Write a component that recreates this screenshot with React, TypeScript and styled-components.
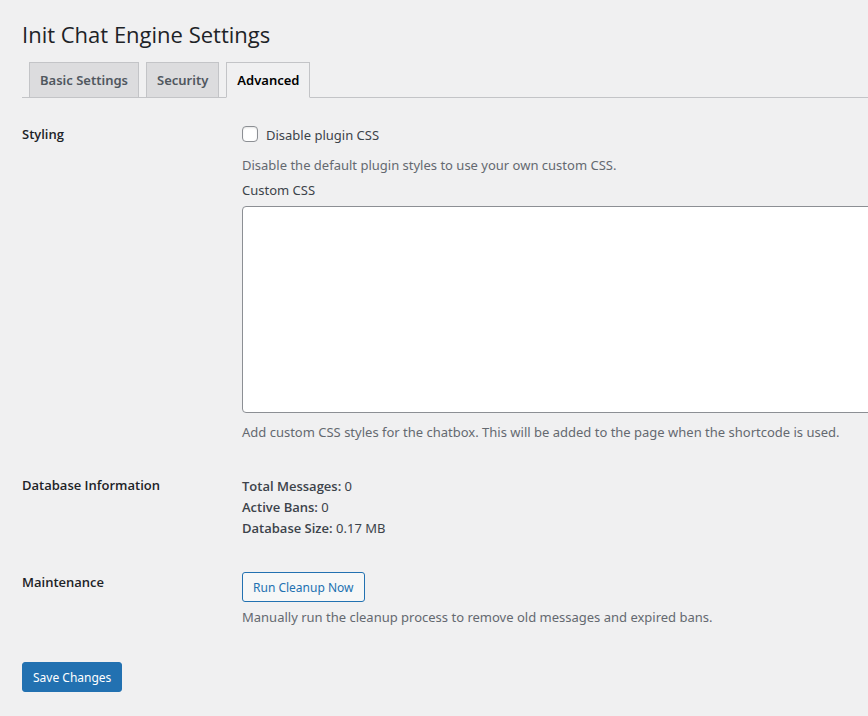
import React from "react";
import styled, { createGlobalStyle } from "styled-components";

const Global = createGlobalStyle`
  *, *::before, *::after { box-sizing: border-box; }
  body {
    margin: 0;
    background: #f0f0f1;
    color: #3c434a;
    font: 13px/20px "Segoe UI", "Noto Sans", "Open Sans", sans-serif;
    overflow-x: hidden;
  }
`;

const Page = styled.main`
  padding: 19px 0 24px 22px;
`;

const Title = styled.h1`
  margin: 0;
  color: #1d2327;
  font-family: "Segoe UI", "Open Sans", sans-serif;
  font-size: 22px;
  font-weight: 400;
  line-height: 30px;
`;

const Tabs = styled.nav`
  display: flex;
  gap: 7px;
  margin-top: 13px;
  padding-left: 7px;
  border-bottom: 1px solid #c3c4c7;
`;

const Tab = styled.a<{ $active?: boolean }>`
  padding: 5px 10px;
  margin-bottom: ${(p) => (p.$active ? "-1px" : "0")};
  border: 1px solid #c3c4c7;
  border-bottom: ${(p) => (p.$active ? "1px solid #f0f0f1" : "0")};
  background: ${(p) => (p.$active ? "#f0f0f1" : "#dcdcde")};
  color: ${(p) => (p.$active ? "#000" : "#50575e")};
  font-weight: 600;
  line-height: 24px;
  text-decoration: none;
  white-space: nowrap;
`;

const Form = styled.form`
  margin: 0;
`;

const Section = styled.section`
  display: grid;
  grid-template-columns: 220px minmax(0, 1fr);
  padding-top: 26px;
  & + & { padding-top: 32px; }
`;

const Heading = styled.h2`
  margin: 0;
  color: #1d2327;
  font-family: "Segoe UI", "Open Sans", sans-serif;
  font-size: 13px;
  font-weight: 600;
  line-height: 20px;
`;

const CheckLabel = styled.label`
  display: flex;
  align-items: flex-start;
  gap: 8px;
  line-height: 22px;
`;

const Checkbox = styled.input`
  appearance: none;
  width: 16px;
  height: 16px;
  margin: 2px 0 0;
  border: 1px solid #8c8f94;
  border-radius: 4px;
  background: #fff;
  box-shadow: inset 0 1px 2px rgba(0, 0, 0, 0.1);
  &:checked { background: #2271b1; }
`;

const Note = styled.p<{ $tight?: boolean }>`
  margin: ${(p) => (p.$tight ? "4px" : "8px")} 0 0;
  color: #646970;
  line-height: 22px;
`;

const FieldLabel = styled.label`
  display: block;
  margin: 3px 0 5px;
  line-height: 22px;
`;

const CodeArea = styled.textarea`
  display: block;
  width: calc(100% + 8px);
  padding: 3px 6px 2px;
  border: 1px solid #8c8f94;
  border-radius: 4px;
  background: #fff;
  color: #2c3338;
  font: 13px/20px "Liberation Mono", monospace;
  resize: none;
  scrollbar-width: none;
`;

const Stats = styled.p`
  margin: 0;
  padding: 1px 0;
  line-height: 21px;
  strong {
    font-family: "Segoe UI", "Open Sans", sans-serif;
    font-weight: 600;
  }
`;

const Button = styled.button<{ $primary?: boolean }>`
  display: block;
  min-height: 30px;
  padding: 2px 10px 0;
  border: 1px solid #2271b1;
  border-radius: 3px;
  background: ${(p) => (p.$primary ? "#2271b1" : "#f6f7f7")};
  color: ${(p) => (p.$primary ? "#fff" : "#2271b1")};
  font: 12px/26px "Segoe UI", "Noto Sans", "Open Sans", sans-serif;
  white-space: nowrap;
  cursor: pointer;
`;

const Submit = styled.div`
  padding-top: 34px;
`;

export default function App() {
  return (
    <>
      <Global />
      <Page>
        <Title>Init Chat Engine Settings</Title>
        <Tabs>
          <Tab href="#basic">Basic Settings</Tab>
          <Tab href="#security">Security</Tab>
          <Tab href="#advanced" $active aria-current="page">Advanced</Tab>
        </Tabs>
        <Form onSubmit={(e) => e.preventDefault()}>
          <Section>
            <Heading>Styling</Heading>
            <div>
              <CheckLabel htmlFor="disable-css">
                <Checkbox id="disable-css" type="checkbox" />
                Disable plugin CSS
              </CheckLabel>
              <Note>Disable the default plugin styles to use your own custom CSS.</Note>
              <FieldLabel htmlFor="custom-css">Custom CSS</FieldLabel>
              <CodeArea id="custom-css" rows={10} />
              <Note>
                Add custom CSS styles for the chatbox. This will be added to the page when the shortcode is used.
              </Note>
            </div>
          </Section>
          <Section>
            <Heading>Database Information</Heading>
            <Stats>
              <strong>Total Messages:</strong> 0<br />
              <strong>Active Bans:</strong> 0<br />
              <strong>Database Size:</strong> 0.17 MB
            </Stats>
          </Section>
          <Section>
            <Heading>Maintenance</Heading>
            <div>
              <Button type="button">Run Cleanup Now</Button>
              <Note $tight>Manually run the cleanup process to remove old messages and expired bans.</Note>
            </div>
          </Section>
          <Submit>
            <Button type="submit" $primary>Save Changes</Button>
          </Submit>
        </Form>
      </Page>
    </>
  );
}
